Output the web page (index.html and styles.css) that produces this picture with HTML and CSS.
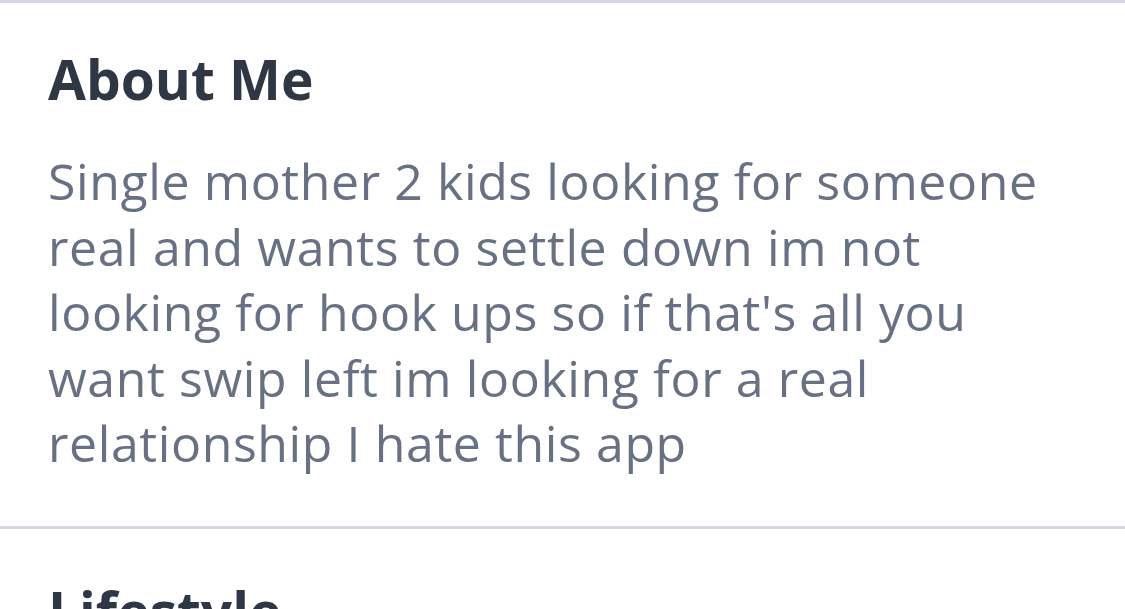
FILE: index.html
```html
<!DOCTYPE html>
<html>
<head>
<meta charset="utf-8">
<link rel="stylesheet" href="styles.css">
</head>
<body>
<div class="page">
  <section class="section">
    <h2 class="title">About Me</h2>
    <p class="bio">Single mother 2 kids looking for someone real and wants to settle down im not looking for hook ups so if that's all you want swip left im looking for a real relationship I hate this app</p>
  </section>
  <section class="section next">
    <h2 class="title">Lifestyle</h2>
  </section>
</div>
</body>
</html>
```
FILE: styles.css
```css
html, body {
  margin: 0;
  padding: 0;
  background: #ffffff;
}
.page {
  width: 1125px;
  font-family: "Open Sans", Lato, sans-serif;
  font-variant-ligatures: none;
}
.section {
  border-top: 3px solid #d5d8e2;
  padding: 42px 48px 49px 48px;
}
.title {
  margin: 0;
  font-size: 55px;
  line-height: 68px;
  font-weight: 700;
  color: #2f3744;
}
.bio {
  margin: 36px 0 0 0;
  width: 1000px;
  font-size: 50px;
  line-height: 65.5px;
  letter-spacing: 0.6px;
  color: #677183;
}
.next {
  padding-top: 48px;
}
```
